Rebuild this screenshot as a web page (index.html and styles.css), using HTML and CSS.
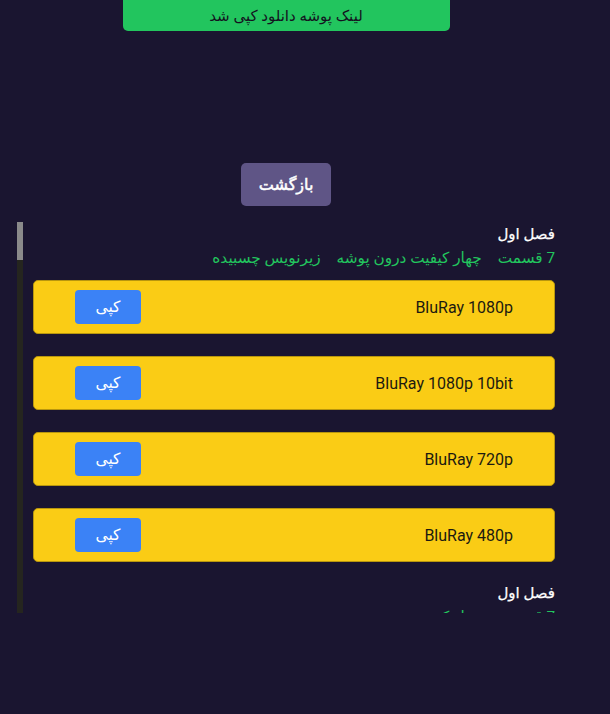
FILE: index.html
```html
<!DOCTYPE html>
<html lang="fa" dir="rtl">
<head>
<meta charset="utf-8">
<link rel="stylesheet" href="styles.css">
</head>
<body>
<div class="wrap">
  <div class="toast">لینک پوشه دانلود کپی شد</div>
  <div class="back-row"><button class="back">بازگشت</button></div>
  <div class="list">
    <div class="scroller">
      <section class="season">
        <div class="season-title">فصل اول</div>
        <div class="season-info"><span>7 قسمت</span><span>چهار کیفیت درون پوشه</span><span>زیرنویس چسبیده</span></div>
        <div class="card"><span class="quality">BluRay 1080p</span><button class="copy">کپی</button></div>
        <div class="card"><span class="quality">BluRay 1080p 10bit</span><button class="copy">کپی</button></div>
        <div class="card"><span class="quality">BluRay 720p</span><button class="copy">کپی</button></div>
        <div class="card"><span class="quality">BluRay 480p</span><button class="copy">کپی</button></div>
      </section>
      <section class="season">
        <div class="season-title">فصل اول</div>
        <div class="season-info"><span>7 قسمت</span><span>چهار کیفیت درون پوشه</span><span>زیرنویس چسبیده</span></div>
        <div class="card"><span class="quality">BluRay 1080p</span><button class="copy">کپی</button></div>
        <div class="card"><span class="quality">BluRay 720p</span><button class="copy">کپی</button></div>
      </section>
    </div>
    <div class="scrollbar"><div class="thumb"></div></div>
  </div>
</div>
</body>
</html>
```

FILE: styles.css
```css
html, body {
  margin: 0;
  padding: 0;
  background: #1a1530;
  height: 100%;
}
body {
  font-family: Roboto, "DejaVu Sans", sans-serif;
  color: #ffffff;
}
.wrap {
  margin: 0 auto 0 17px;
  width: 538px;
  display: flex;
  flex-direction: column;
}
.toast {
  align-self: center;
  width: 327px;
  height: 31px;
  box-sizing: border-box;
  background: #22c55e;
  color: #14121f;
  font-size: 15px;
  display: flex;
  align-items: center;
  justify-content: center;
  border-radius: 0 0 5px 5px;
}
.back-row {
  display: flex;
  justify-content: center;
  margin-top: 132px;
}
.back {
  width: 90px;
  height: 43px;
  border: none;
  border-radius: 5px;
  background: #5f5586;
  color: #ffffff;
  font-family: "DejaVu Sans", sans-serif;
  font-size: 16px;
  font-weight: normal;
  -webkit-text-stroke: 0.5px #ffffff;
}
.list {
  margin-top: 16px;
  height: 391px;
  display: flex;
}
.scroller {
  flex: 1;
  overflow: hidden;
  padding-left: 10px;
}
.scrollbar {
  width: 6px;
  background: #25251f;
  flex-shrink: 0;
}
.thumb {
  height: 38px;
  background: #8a8a8a;
}
.season-title {
  font-size: 15px;
  line-height: 22px;
  padding-top: 1px;
  -webkit-text-stroke: 0.25px #ffffff;
}
.season-info {
  display: flex;
  gap: 16px;
  color: #22c55e;
  font-size: 15.3px;
  line-height: 22px;
  margin-top: 2px;
  margin-bottom: 11px;
}
.card {
  height: 54px;
  box-sizing: border-box;
  background: #facc15;
  border: 1px solid #b8960e;
  border-radius: 5px;
  display: flex;
  align-items: center;
  justify-content: space-between;
  padding: 0 41px;
  margin-bottom: 22px;
}
.card:last-child {
  margin-bottom: 19px;
}
.quality {
  direction: ltr;
  color: #1c1a10;
  font-size: 16px;
}
.copy {
  width: 66px;
  height: 34px;
  border: none;
  border-radius: 4px;
  background: #3b82f6;
  color: #ffffff;
  font-family: "DejaVu Sans", sans-serif;
  font-size: 15.5px;
}
```
